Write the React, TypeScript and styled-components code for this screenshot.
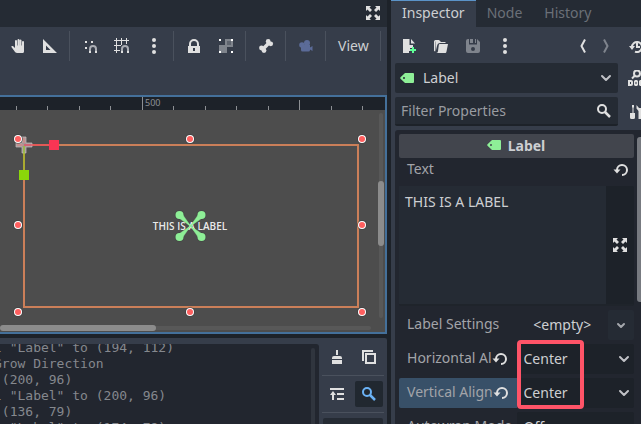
import React from 'react';
import styled, { createGlobalStyle, css } from 'styled-components';

const c = {
  gap: '#1d2229',
  base: '#363d4a',
  dark: '#252b34',
  panel: '#22262f',
  accent: '#44709a',
  line: '#4a515d',
  text: '#cdcfd2',
  muted: '#a2a4a9',
  faint: '#6b7078',
  icon: '#e0e0e0',
  green: '#8eef97',
};

const GlobalStyle = createGlobalStyle`
  * { box-sizing: border-box; }
  html, body { margin: 0; background: ${c.gap}; overflow: hidden; }
  body, button, input, select, textarea {
    font-family: "Noto Sans", "Open Sans", sans-serif;
    font-size: 14px;
    color: ${c.text};
  }
  button, input, select, textarea { border: 0; margin: 0; padding: 0; background: none; outline: 0; }
  svg { display: block; flex: none; }
`;

/* ---------- icons ---------- */

const Icon = ({ children, color = c.icon }: { children: React.ReactNode; color?: string }) => (
  <svg width="16" height="16" viewBox="0 0 16 16" fill={color} stroke="none" aria-hidden="true">
    {children}
  </svg>
);

const ExpandIcon = () => (
  <Icon>
    <path d="M1 1h5L4.500 2.500 7 5 5 7 2.500 4.500 1 6zM15 1v5l-1.500-1.500L11 7 9 5l2.500-2.500L10 1zM1 15v-5l1.500 1.500L5 9l2 2-2.500 2.500L6 15zM15 15h-5l1.500-1.500L9 11l2-2 2.500 2.500L15 10z" />
  </Icon>
);
const HandIcon = () => (
  <Icon>
    <path d="M8.500 1a1 1 0 0 0-1 1v5.500H7V3a1 1 0 0 0-2 0v7L3.200 8.200C2.400 7.600 1.400 8 1.200 8.800L4 12.500C5.200 14.300 6 15 7 15h5.500c1 0 1.500-.6 1.500-1.500V4a1 1 0 0 0-2 0v3.500h-.5V2.200a1 1 0 0 0-1.900 0V7.500h-.1V2a1 1 0 0 0-1-1z" />
  </Icon>
);
const RulerIcon = () => (
  <Icon>
    <path fillRule="evenodd" d="M1 1v14h14zM4 7.500V12h4.500z" />
  </Icon>
);
const Magnet = () => (
  <>
    <path d="M8 13v-2a3 3 0 0 1 6 0v2" fill="none" stroke="#a9acb3" strokeWidth="2" />
    <path d="M7 13h2v2H7zM13 13h2v2h-2z" />
  </>
);
const SnapIcon = () => (
  <Icon>
    <path d="M3 3h2v2H3zM9 3h2v2H9zM3 9h2v2H3z" />
    <Magnet />
  </Icon>
);
const GridSnapIcon = () => (
  <Icon>
    <path d="M2 0h1v15H2zM7 0h1v7H7zM12 0h1v6h-1zM0 2h15v1H0zM0 7h7v1H0zM0 12h6v1H0z" />
    <Magnet />
  </Icon>
);
const DotsIcon = () => (
  <Icon>
    <circle cx="8" cy="2" r="2" />
    <circle cx="8" cy="8" r="2" />
    <circle cx="8" cy="14" r="2" />
  </Icon>
);
const LockIcon = () => (
  <Icon>
    <path fillRule="evenodd" d="M8 1a5 5 0 0 0-5 5v2H2v7h12V8h-1V6a5 5 0 0 0-5-5zm0 2a3 3 0 0 1 3 3v2H5V6a3 3 0 0 1 3-3zM7 10h2v3H7z" />
  </Icon>
);
const GroupIcon = () => (
  <Icon>
    <path fill="#7f848c" fillRule="evenodd" d="M7 1h8v8H9v6H1V7h6zM9 3v4h4V3z" />
    <path fill="#5f656f" d="M9 3h4v4H9z" />
    <path fill="#fff" d="M1 1h2v2H1zM13 1h2v2h-2zM1 13h2v2H1zM13 13h2v2h-2z" />
  </Icon>
);
const BoneIcon = () => (
  <Icon>
    <path d="M4.800 11.200 11.200 4.800" stroke={c.icon} strokeWidth="3.500" />
    <circle cx="3.500" cy="10" r="2.400" />
    <circle cx="6" cy="12.600" r="2.400" />
    <circle cx="10.200" cy="3.400" r="2.400" />
    <circle cx="12.700" cy="5.800" r="2.400" />
  </Icon>
);
const CameraIcon = () => (
  <Icon color="#5b6b98">
    <circle cx="9" cy="5" r="3" />
    <circle cx="4" cy="7" r="2.800" />
    <path d="M3 7h9v2.500L14.500 8v5L12 11.500V12a1.500 1.500 0 0 1-1.500 1.500h-6A1.500 1.500 0 0 1 3 12z" />
  </Icon>
);
const NewIcon = () => (
  <Icon>
    <path d="M2 1v14h6v-2h1v-3h3V7H8.500V1zM10 1v4.500h4z" />
    <path fill="#5fff97" d="M11 9h2v2h2v2h-2v2h-2v-2H9v-2h2z" />
  </Icon>
);
const FolderIcon = () => (
  <Icon>
    <path d="M1 3.500A1.500 1.500 0 0 1 2.500 2H6l2 2h4.500v1H7.500C5 5 4.500 6 4 8l-1.200 5L2.500 3.500H2.200V13.500L1 13z" />
    <path d="M7 6h8l-1.500 7.500c-.2 1-.7 1.500-1.500 1.500H3c1.500 0 1.800-1 2-2L5.800 7C6 6.300 6.300 6 7 6z" />
  </Icon>
);
const SaveIcon = () => (
  <Icon color="#7f848d">
    <path fillRule="evenodd" d="M1 3v10a2 2 0 0 0 2 2h10a2 2 0 0 0 2-2V4l-3-3v5.500H4V1H3a2 2 0 0 0-2 2zM8 9a2 2 0 1 1 0 4 2 2 0 0 1 0-4z" />
    <path d="M5 1h3v4H5zM10 1h1v4h-1z" />
  </Icon>
);
const BackIcon = () => (
  <Icon><path d="M11 1.500 7.500 8l3.500 6.500" fill="none" stroke={c.icon} strokeWidth="2" /></Icon>
);
const ForwardIcon = () => (
  <Icon><path d="M6 1.500 9.500 8 6 14.500" fill="none" stroke="#7f848d" strokeWidth="2" /></Icon>
);
const HistoryIcon = () => (
  <Icon>
    <path d="M4 9a5 5 0 1 1 3 4.600M9 5v4h3" fill="none" stroke={c.icon} strokeWidth="2" />
    <path d="M1 8h6l-3 4z" />
  </Icon>
);
const TagIcon = () => (
  <Icon color={c.green}>
    <path fillRule="evenodd" d="M6 3 1.500 7.200a1.200 1.200 0 0 0 0 1.600L6 13h8a1 1 0 0 0 1-1V4a1 1 0 0 0-1-1zM5 7a1 1 0 1 1 0 2 1 1 0 0 1 0-2z" />
  </Icon>
);
const ChevronIcon = ({ small = false }: { small?: boolean }) => (
  <Icon>
    <path d={small ? 'M5 7 8 10l3-3' : 'M4 6 8 10l4-4'} fill="none" stroke={small ? '#a4a7ac' : '#c0c2c6'} strokeWidth="2" strokeLinecap="round" strokeLinejoin="round" />
  </Icon>
);
const SearchIcon = ({ color = c.icon }: { color?: string }) => (
  <Icon>
    <circle cx="6" cy="6" r="4" fill="none" stroke={color} strokeWidth="2" />
    <path d="m9 9 5 5" fill="none" stroke={color} strokeWidth="2.500" />
  </Icon>
);
const DocIcon = () => (
  <Icon>
    <circle cx="9" cy="3.500" r="3" fill="none" stroke={c.icon} strokeWidth="2" />
    <path d="M7 5.500 4 8.500" stroke={c.icon} strokeWidth="2" />
    <path fillRule="evenodd" d="M0 10h3a2 2 0 0 1 2 2v2a2 2 0 0 1-2 2H0zm2 2v2h1v-2zM6 11l1-1h2l1 1v4l-1 1H7l-1-1zm1.500 1v2h1v-2zM11 11l1-1h4v2h-3v2h3v2h-4l-1-1z" />
  </Icon>
);
const ToolsIcon = () => (
  <Icon>
    <path d="M4 1h2v2l-.5 1v5H7v4.500A1.500 1.500 0 0 1 5.500 15h-2A1.500 1.500 0 0 1 2 13.500V9h2.500V4L4 3z" />
    <path d="M8.500 1v3.500L10.500 7v8h3V7l2-2.500V1L13 4h-2z" />
  </Icon>
);
const ResetIcon = () => (
  <Icon>
    <path d="M4 9V8a5 5 0 1 1 5 5" fill="none" stroke={c.icon} strokeWidth="2" />
    <path d="M0.500 7.500h7L4 11.500z" />
  </Icon>
);
const ClearIcon = () => (
  <Icon>
    <path d="M7 1h2v5H7zM5 7h6a2 2 0 0 1 2 2v1H3V9a2 2 0 0 1 2-2zM3 11h10v4H3z" />
  </Icon>
);
const CopyIcon = () => (
  <Icon>
    <path d="M2 12V2h10" fill="none" stroke={c.icon} strokeWidth="2" />
    <path d="M5 5h9v9H5z" fill="none" stroke={c.icon} strokeWidth="2" />
  </Icon>
);
const CollapseIcon = () => (
  <Icon>
    <path d="M1 2h14v2H1zM8 7h7v2H8zM8 12h7v2H8zM4 5l3 4H5v5H3V9H1z" />
  </Icon>
);

/* ---------- shell ---------- */

const Editor = styled.main`
  display: flex;
  gap: 4px;
  height: 100vh;
  overflow: hidden;
`;
const Workspace = styled.section`
  flex: 1;
  min-width: 0;
  display: flex;
  flex-direction: column;
`;
const TitleStrip = styled.header`
  display: flex;
  flex: none;
  justify-content: flex-end;
  height: 27px;
  background: ${c.dark};
`;
const IconButton = styled.button<{ $w?: number; $active?: boolean }>`
  display: flex;
  flex: none;
  align-items: center;
  justify-content: center;
  width: ${(p) => p.$w ?? 32}px;
  height: 26px;
  border-radius: 2px;
  background: ${(p) => (p.$active ? '#212830' : 'transparent')};
`;
const CanvasToolbar = styled.div`
  display: flex;
  flex: none;
  align-items: center;
  height: 68px;
  padding: 0 2px 30px;
  background: ${c.base};
`;
const Separator = styled.span`
  flex: none;
  width: 1px;
  height: 30px;
  margin: 0 4px 0 3px;
  background: ${c.line};
`;
const TextButton = styled.button`
  padding: 0 8px 2px;
`;

/* ---------- canvas ---------- */

const Viewport = styled.div`
  display: flex;
  flex-direction: column;
  flex: 1;
  min-height: 0;
  border: solid ${c.accent};
  border-width: 2px 2px 2px 0;
  background: #4d4d4d;
`;
const Ruler = styled.svg`
  width: 100%;
  height: 13px;
  background: ${c.gap};
`;
const Stage = styled.div`
  position: relative;
  flex: 1;
  min-height: 0;
  overflow: hidden;
`;
const Track = styled.div<{ $vertical?: boolean }>`
  position: absolute;
  display: flex;
  border-radius: 3px;
  background: #585858;
  ${(p) =>
    p.$vertical
      ? css`right: 2px; top: 3px; bottom: 14px; width: 4px; justify-content: center;`
      : css`left: 0; right: 14px; bottom: 2px; height: 4px; align-items: center;`}
`;
const Grabber = styled.div<{ $vertical?: boolean }>`
  flex: none;
  border-radius: 3px;
  background: #8c8c8c;
  ${(p) =>
    p.$vertical
      ? css`width: 6px; height: 65px; margin-top: 68px;`
      : css`width: 156px; height: 6px;`}
`;

const ticks = [16, 47, 79, 110, 173, 205, 236, 268, 331, 362];
const handles = [
  [18, 139], [190, 139], [362, 139], [18, 225],
  [362, 225], [18, 312], [190, 312], [362, 312],
];
const anchors = [[-11, -11], [11, -11], [-11, 11], [11, 11]];

const Scene = () => (
  <svg width="385" height="222" viewBox="0 110 385 222">
    <rect x="24" y="145" width="334" height="162" fill="none" stroke="#cb7f59" strokeWidth="2" />
    {anchors.map(([x, y]) => (
      <g key={`${x} ${y}`} fill={c.green}>
        <circle cx={190.5 + x} cy={226 + y} r="4.800" fill="#3d453f" opacity="0.600" />
        <path d={`M190.500 226 L${190.5 + x - 2} ${226 + y + (x * y > 0 ? 2 : -2)} L${190.5 + x + 2} ${226 + y - (x * y > 0 ? 2 : -2)}Z`} stroke={c.green} strokeWidth="0.500" />
        <circle cx={190.5 + x} cy={226 + y} r="4" />
      </g>
    ))}
    <text x="190" y="230" textAnchor="middle" fill="#fff" fillOpacity="0.900" fontFamily="Open Sans, Noto Sans, sans-serif" fontSize="10" fontWeight="600">
      THIS IS A LABEL
    </text>
    <path d="M190.500 226 181 216.500M190.500 226 200 216.500M190.500 226 181 235.500M190.500 226 200 235.500" stroke={c.green} strokeWidth="1.500" />
    <path d="M22 137h4v6h6v4h-6v6h-4v-6h-6v-4h6z" fill="#a79696" stroke="#c9bcbc" strokeOpacity="0.700" />
    <path d="M24 145h26" stroke="#f93554" />
    <path d="M24 146v25" stroke="#8bd60a" />
    <path d="M17 145h6M24 138v5" stroke="#e08a86" />
    <rect x="49" y="140" width="10" height="10" fill="#f93554" />
    <rect x="19" y="170" width="10" height="10" fill="#8bd60a" />
    {handles.map(([x, y]) => (
      <g key={`${x} ${y}`}>
        <circle cx={x} cy={y} r="4.800" fill="#3a3a3a" opacity="0.700" />
        <circle cx={x} cy={y} r="4" fill="#fff" />
        <circle cx={x} cy={y} r="3" fill="#ff5f5f" />
      </g>
    ))}
  </svg>
);

/* ---------- output ---------- */

const Output = styled.section`
  display: flex;
  flex: none;
  height: 86px;
  margin-top: 4px;
  padding-top: 6px;
  overflow: hidden;
  border-radius: 0 2px 0 0;
  background: ${c.base};
`;
const Log = styled.div`
  display: flex;
  justify-content: space-between;
  flex: 1;
  min-width: 0;
  overflow: hidden;
  border-radius: 0 3px 0 0;
  background: ${c.panel};
`;
const LogText = styled.pre`
  margin: -4px 0 0 -6px;
  font: 13px/16px "DejaVu Sans Mono", monospace;
  color: #85888e;
`;
const LogScroll = styled.div`
  width: 4px;
  height: 100px;
  margin: 4px 4px 0;
  border-radius: 2px;
  background: #30353e;
`;
const OutputTools = styled.div`
  display: grid;
  flex: none;
  grid-template-columns: 28px 28px;
  grid-template-rows: 26px 1px 26px 1px 26px;
  gap: 5px 4px;
  width: 68px;
  padding: 0 4px;
`;
const Rule = styled.span`
  grid-column: 1 / -1;
  margin: 0 -1px;
  background: ${c.line};
`;
const FilterChip = styled.span`
  grid-column: 1 / -1;
  border-radius: 2px;
  background: ${c.dark};
`;

/* ---------- inspector ---------- */

const Dock = styled.aside`
  display: flex;
  flex-direction: column;
  flex: none;
  width: 39%;
  overflow: hidden;
  background: ${c.base};
`;
const Tabs = styled.nav`
  display: flex;
  flex: none;
  height: 27px;
  background: ${c.dark};
`;
const Tab = styled.button<{ $active?: boolean }>`
  padding: 0 11px 3px;
  border-top: 1px solid ${(p) => (p.$active ? '#5b93c8' : c.dark)};
  background: ${(p) => (p.$active ? c.base : 'transparent')};
  color: ${(p) => (p.$active ? c.text : c.faint)};
`;
const DockRow = styled.div`
  display: flex;
  flex: none;
  align-items: center;
  padding: 0 0 4px 4px;
`;
const DockTools = styled.div`
  display: flex;
  flex: none;
  align-items: center;
  height: 36px;
  padding: 2px 0 0 2px;
`;
const Spacer = styled.span`
  flex: 1;
`;
const SideButton = styled.button`
  display: flex;
  flex: none;
  width: 23px;
  padding-left: 10px;
  overflow: hidden;
`;
const Field = styled.div`
  display: flex;
  flex: 1;
  align-items: center;
  min-width: 0;
  height: 30px;
  padding: 0 4px;
  gap: 8px;
  border-radius: 2px;
  background: ${c.dark};
`;
const FilterField = styled(Field)`
  height: 29px;
  padding: 0 6px;
  border-bottom: 2px solid ${c.gap};
`;
const PlainSelect = styled.select`
  flex: 1;
  min-width: 0;
  height: 100%;
  padding-bottom: 2px;
  appearance: none;
`;
const FilterInput = styled.input`
  flex: 1;
  min-width: 0;
  height: 100%;
  &::placeholder { color: #999ca1; opacity: 1; }
`;
const Properties = styled.div`
  display: flex;
  flex: 1;
  min-height: 0;
  margin-left: 4px;
  padding: 4px 0 0 4px;
  gap: 3px;
  overflow: hidden;
  border-radius: 3px 0 0 0;
  background: ${c.panel};
`;
const PropertyList = styled.div`
  flex: 1;
  min-width: 0;
`;
const DockScroll = styled.div`
  flex: none;
  width: 4px;
  height: 165px;
  margin-top: 3px;
  border-radius: 3px 0 0 3px;
  background: #777a80;
`;
const Category = styled.h2`
  display: flex;
  align-items: center;
  justify-content: center;
  height: 24px;
  margin: 0;
  gap: 6px;
  padding: 0 2px 2px 0;
  font-size: 14px;
  font-weight: 700;
  border-radius: 2px;
  background: #42454d;
`;
const PropertyHead = styled.div`
  display: flex;
  align-items: center;
  justify-content: space-between;
  height: 28px;
  padding: 0 5px 8px 8px;
  color: ${c.muted};
`;
const TextBox = styled.div`
  display: flex;
  height: 120px;
  margin-bottom: 4px;
  border-bottom: 2px solid #1f242b;
  border-radius: 2px;
  background: ${c.gap};
`;
const TextArea = styled.textarea`
  flex: 1;
  min-width: 0;
  padding: 6px;
  line-height: 20px;
  resize: none;
  background: ${c.dark};
`;
const TextExpand = styled.button`
  display: flex;
  flex: none;
  align-items: center;
  justify-content: center;
  width: 28px;
`;
const Row = styled.div<{ $selected?: boolean }>`
  display: grid;
  grid-template-columns: 1fr 1fr;
  height: 30px;
  margin-bottom: 4px;
  border-radius: 2px;
  background: linear-gradient(to right, ${(p) => (p.$selected ? '#385068' : 'transparent')} 50%, transparent 50%);
`;
const RowLabel = styled.label`
  display: flex;
  align-items: center;
  min-width: 0;
  padding: 0 0 4px 8px;
  white-space: nowrap;
  color: ${c.muted};
`;
const InlineReset = styled.button`
  display: flex;
  flex: none;
  padding-top: 4px;
`;
const ValueBox = styled.div`
  display: flex;
  align-items: center;
  min-width: 0;
  padding: 0 2px 0 7px;
  border-radius: 2px;
  background: ${c.gap};
`;
const Resource = styled.div`
  display: flex;
  min-width: 0;
`;
const ResourceName = styled.button`
  flex: 1;
  padding-bottom: 2px;
`;
const ResourceMenu = styled.button`
  display: flex;
  align-items: center;
  justify-content: center;
  width: 26px;
  border-radius: 2px;
  background: ${c.dark};
`;
const Highlighted = styled.div`
  position: relative;
`;
const Marker = styled.div`
  position: absolute;
  left: 50%;
  top: -4px;
  bottom: -1px;
  width: 67px;
  border: 4px solid #ff5468;
  border-radius: 4px;
  pointer-events: none;
`;

type EnumRowProps = { id: string; label: string; value: string; options: string[]; selected?: boolean; reset?: boolean };
const EnumRow = ({ id, label, value, options, selected, reset }: EnumRowProps) => (
  <Row $selected={selected}>
    <RowLabel htmlFor={id}>
      {label}
      {reset && <InlineReset aria-label="Reset"><ResetIcon /></InlineReset>}
    </RowLabel>
    <ValueBox>
      <PlainSelect id={id} defaultValue={value}>
        {options.map((o) => <option key={o}>{o}</option>)}
      </PlainSelect>
      <ChevronIcon />
    </ValueBox>
  </Row>
);

export default function App() {
  return (
    <>
      <GlobalStyle />
      <Editor>
        <Workspace>
          <TitleStrip>
            <IconButton $w={28} aria-label="Distraction free mode"><ExpandIcon /></IconButton>
          </TitleStrip>
          <CanvasToolbar>
            <IconButton aria-label="Pan"><HandIcon /></IconButton>
            <IconButton aria-label="Ruler"><RulerIcon /></IconButton>
            <Separator />
            <IconButton aria-label="Smart snap"><SnapIcon /></IconButton>
            <IconButton aria-label="Grid snap"><GridSnapIcon /></IconButton>
            <IconButton aria-label="Snapping options"><DotsIcon /></IconButton>
            <Separator />
            <IconButton aria-label="Lock"><LockIcon /></IconButton>
            <IconButton aria-label="Group"><GroupIcon /></IconButton>
            <Separator />
            <IconButton aria-label="Skeleton"><BoneIcon /></IconButton>
            <Separator />
            <IconButton aria-label="Camera override"><CameraIcon /></IconButton>
            <Separator />
            <TextButton>View</TextButton>
            <Separator />
          </CanvasToolbar>
          <Viewport>
            <Ruler>
              {ticks.map((x) => <rect key={x} x={x} y="9" width="1" height="4" fill="#8d9094" />)}
              <rect x="142" y="0" width="1" height="13" fill="#8d9094" />
              <rect x="299" y="3" width="1" height="10" fill="#8d9094" />
              <text x="145" y="9" fill="#8d9094" fontFamily="Noto Sans, sans-serif" fontSize="9">500</text>
            </Ruler>
            <Stage>
              <Scene />
              <Track><Grabber /></Track>
              <Track $vertical><Grabber $vertical /></Track>
            </Stage>
          </Viewport>
          <Output>
            <Log>
              <LogText>{`l "Label" to (194, 112)
Grow Direction
 (200, 96)
l "Label" to (200, 96)
 (136, 79)
l "Label" to (174, 79)`}</LogText>
              <LogScroll />
            </Log>
            <OutputTools>
              <IconButton $w={28} aria-label="Clear output"><ClearIcon /></IconButton>
              <IconButton $w={28} aria-label="Copy"><CopyIcon /></IconButton>
              <Rule />
              <IconButton $w={28} aria-label="Collapse duplicates"><CollapseIcon /></IconButton>
              <IconButton $w={28} $active aria-label="Search"><SearchIcon color="#6bb2f5" /></IconButton>
              <Rule />
              <FilterChip />
            </OutputTools>
          </Output>
        </Workspace>

        <Dock>
          <Tabs>
            <Tab $active>Inspector</Tab>
            <Tab>Node</Tab>
            <Tab>History</Tab>
          </Tabs>
          <DockTools>
            <IconButton aria-label="New resource"><NewIcon /></IconButton>
            <IconButton aria-label="Load resource"><FolderIcon /></IconButton>
            <IconButton aria-label="Save resource"><SaveIcon /></IconButton>
            <IconButton aria-label="Resource options"><DotsIcon /></IconButton>
            <Spacer />
            <IconButton $w={24} aria-label="Back"><BackIcon /></IconButton>
            <IconButton $w={24} aria-label="Forward"><ForwardIcon /></IconButton>
            <SideButton aria-label="Object history"><HistoryIcon /></SideButton>
          </DockTools>
          <DockRow>
            <Field>
              <TagIcon />
              <PlainSelect aria-label="Edited object" defaultValue="Label"><option>Label</option></PlainSelect>
              <ChevronIcon />
            </Field>
            <SideButton aria-label="Open documentation"><DocIcon /></SideButton>
          </DockRow>
          <DockRow>
            <FilterField>
              <FilterInput aria-label="Filter Properties" placeholder="Filter Properties" />
              <SearchIcon />
            </FilterField>
            <SideButton aria-label="Manage properties"><ToolsIcon /></SideButton>
          </DockRow>
          <Properties>
            <PropertyList>
              <Category><TagIcon />Label</Category>
              <PropertyHead>
                <label htmlFor="text">Text</label>
                <InlineReset aria-label="Reset text"><ResetIcon /></InlineReset>
              </PropertyHead>
              <TextBox>
                <TextArea id="text" defaultValue="THIS IS A LABEL" spellCheck={false} />
                <TextExpand aria-label="Expand editor"><ExpandIcon /></TextExpand>
              </TextBox>
              <Row>
                <RowLabel as="span">Label Settings</RowLabel>
                <Resource>
                  <ResourceName>&lt;empty&gt;</ResourceName>
                  <ResourceMenu aria-label="Label settings menu"><ChevronIcon small /></ResourceMenu>
                </Resource>
              </Row>
              <Highlighted>
                <EnumRow id="h" label="Horizontal Al" value="Center" options={['Left', 'Center', 'Right', 'Fill']} reset />
                <EnumRow id="v" label="Vertical Align" value="Center" options={['Top', 'Center', 'Bottom', 'Fill']} selected reset />
                <Marker />
              </Highlighted>
              <EnumRow id="wrap" label="Autowrap Mode" value="Off" options={['Off', 'Arbitrary', 'Word', 'Word (Smart)']} />
            </PropertyList>
            <DockScroll />
          </Properties>
        </Dock>
      </Editor>
    </>
  );
}
